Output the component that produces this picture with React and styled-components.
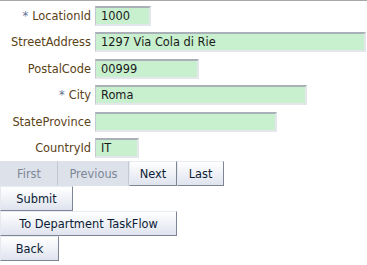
import React from 'react'
import styled, { createGlobalStyle } from 'styled-components'

const Global = createGlobalStyle`
  body {
    margin: 0;
    background: #fff;
    font-family: Tahoma, "DejaVu Sans", Verdana, sans-serif;
    font-size: 11.4px;
  }
`

const Page = styled.div`
  border-top: 1px solid #a8a8a8;
  padding-top: 5px;
`

const Form = styled.div`
  display: grid;
  grid-template-columns: 91px auto;
  grid-auto-rows: 20px;
  column-gap: 4px;
  row-gap: 6.4px;
  align-items: center;
`

const Label = styled.label`
  text-align: right;
  color: #5a4217;
  white-space: nowrap;
`

const Req = styled.span`
  color: #5f7391;
  margin-right: 4px;
`

const Field = styled.div`
  width: ${p => p.$w}px;
  height: 20px;
  box-sizing: border-box;
  background: #c8f0cf;
  border-top: 2px solid #a9b0b8;
  border-left: 1px solid #c4c9cf;
  border-right: 2px solid #e3e6ea;
  border-bottom: 2px solid #e3e6ea;
  padding-left: 5px;
  line-height: 16px;
  color: #1a1a1a;
  white-space: nowrap;
  overflow: hidden;
`

const Nav = styled.div`
  display: flex;
  margin-top: 3.5px;
`

const Button = styled.button`
  font: inherit;
  display: block;
  width: ${p => p.$w}px;
  height: 25px;
  padding: 0;
  margin: 0;
  text-align: center;
  color: ${p => (p.disabled ? '#7c8696' : '#0c1c36')};
  background: ${p =>
    p.disabled ? '#dde2ea' : 'linear-gradient(#ffffff, #f1f3f8 45%, #dfe3ee)'};
  border: none;
  border-top: 1px solid ${p => (p.disabled ? '#dde2ea' : '#e8ebf2')};
  border-left: 1px solid ${p => (p.disabled ? '#dde2ea' : '#e6e9f0')};
  border-right: 1px solid ${p => (p.disabled ? '#c3c9d3' : '#7d8595')};
  border-bottom: 1px solid ${p => (p.disabled ? '#dde2ea' : '#7d8595')};
`

const Stack = styled.div`
  display: flex;
  flex-direction: column;
  align-items: flex-start;
`

const rows = [
  { label: 'LocationId', value: '1000', w: 56, req: true },
  { label: 'StreetAddress', value: '1297 Via Cola di Rie', w: 271 },
  { label: 'PostalCode', value: '00999', w: 104 },
  { label: 'City', value: 'Roma', w: 212, req: true },
  { label: 'StateProvince', value: '', w: 182 },
  { label: 'CountryId', value: 'IT', w: 44 },
]

export default function App() {
  return (
    <Page>
      <Global />
      <Form>
        {rows.map(r => (
          <React.Fragment key={r.label}>
            <Label>
              {r.req && <Req>*</Req>}
              {r.label}
            </Label>
            <Field $w={r.w}>{r.value}</Field>
          </React.Fragment>
        ))}
      </Form>
      <Nav>
        <Button disabled $w={58}>First</Button>
        <Button disabled $w={71}>Previous</Button>
        <Button $w={48}>Next</Button>
        <Button $w={47}>Last</Button>
      </Nav>
      <Stack>
        <Button $w={73}>Submit</Button>
        <Button $w={177}>To Department TaskFlow</Button>
        <Button $w={59}>Back</Button>
      </Stack>
    </Page>
  )
}
